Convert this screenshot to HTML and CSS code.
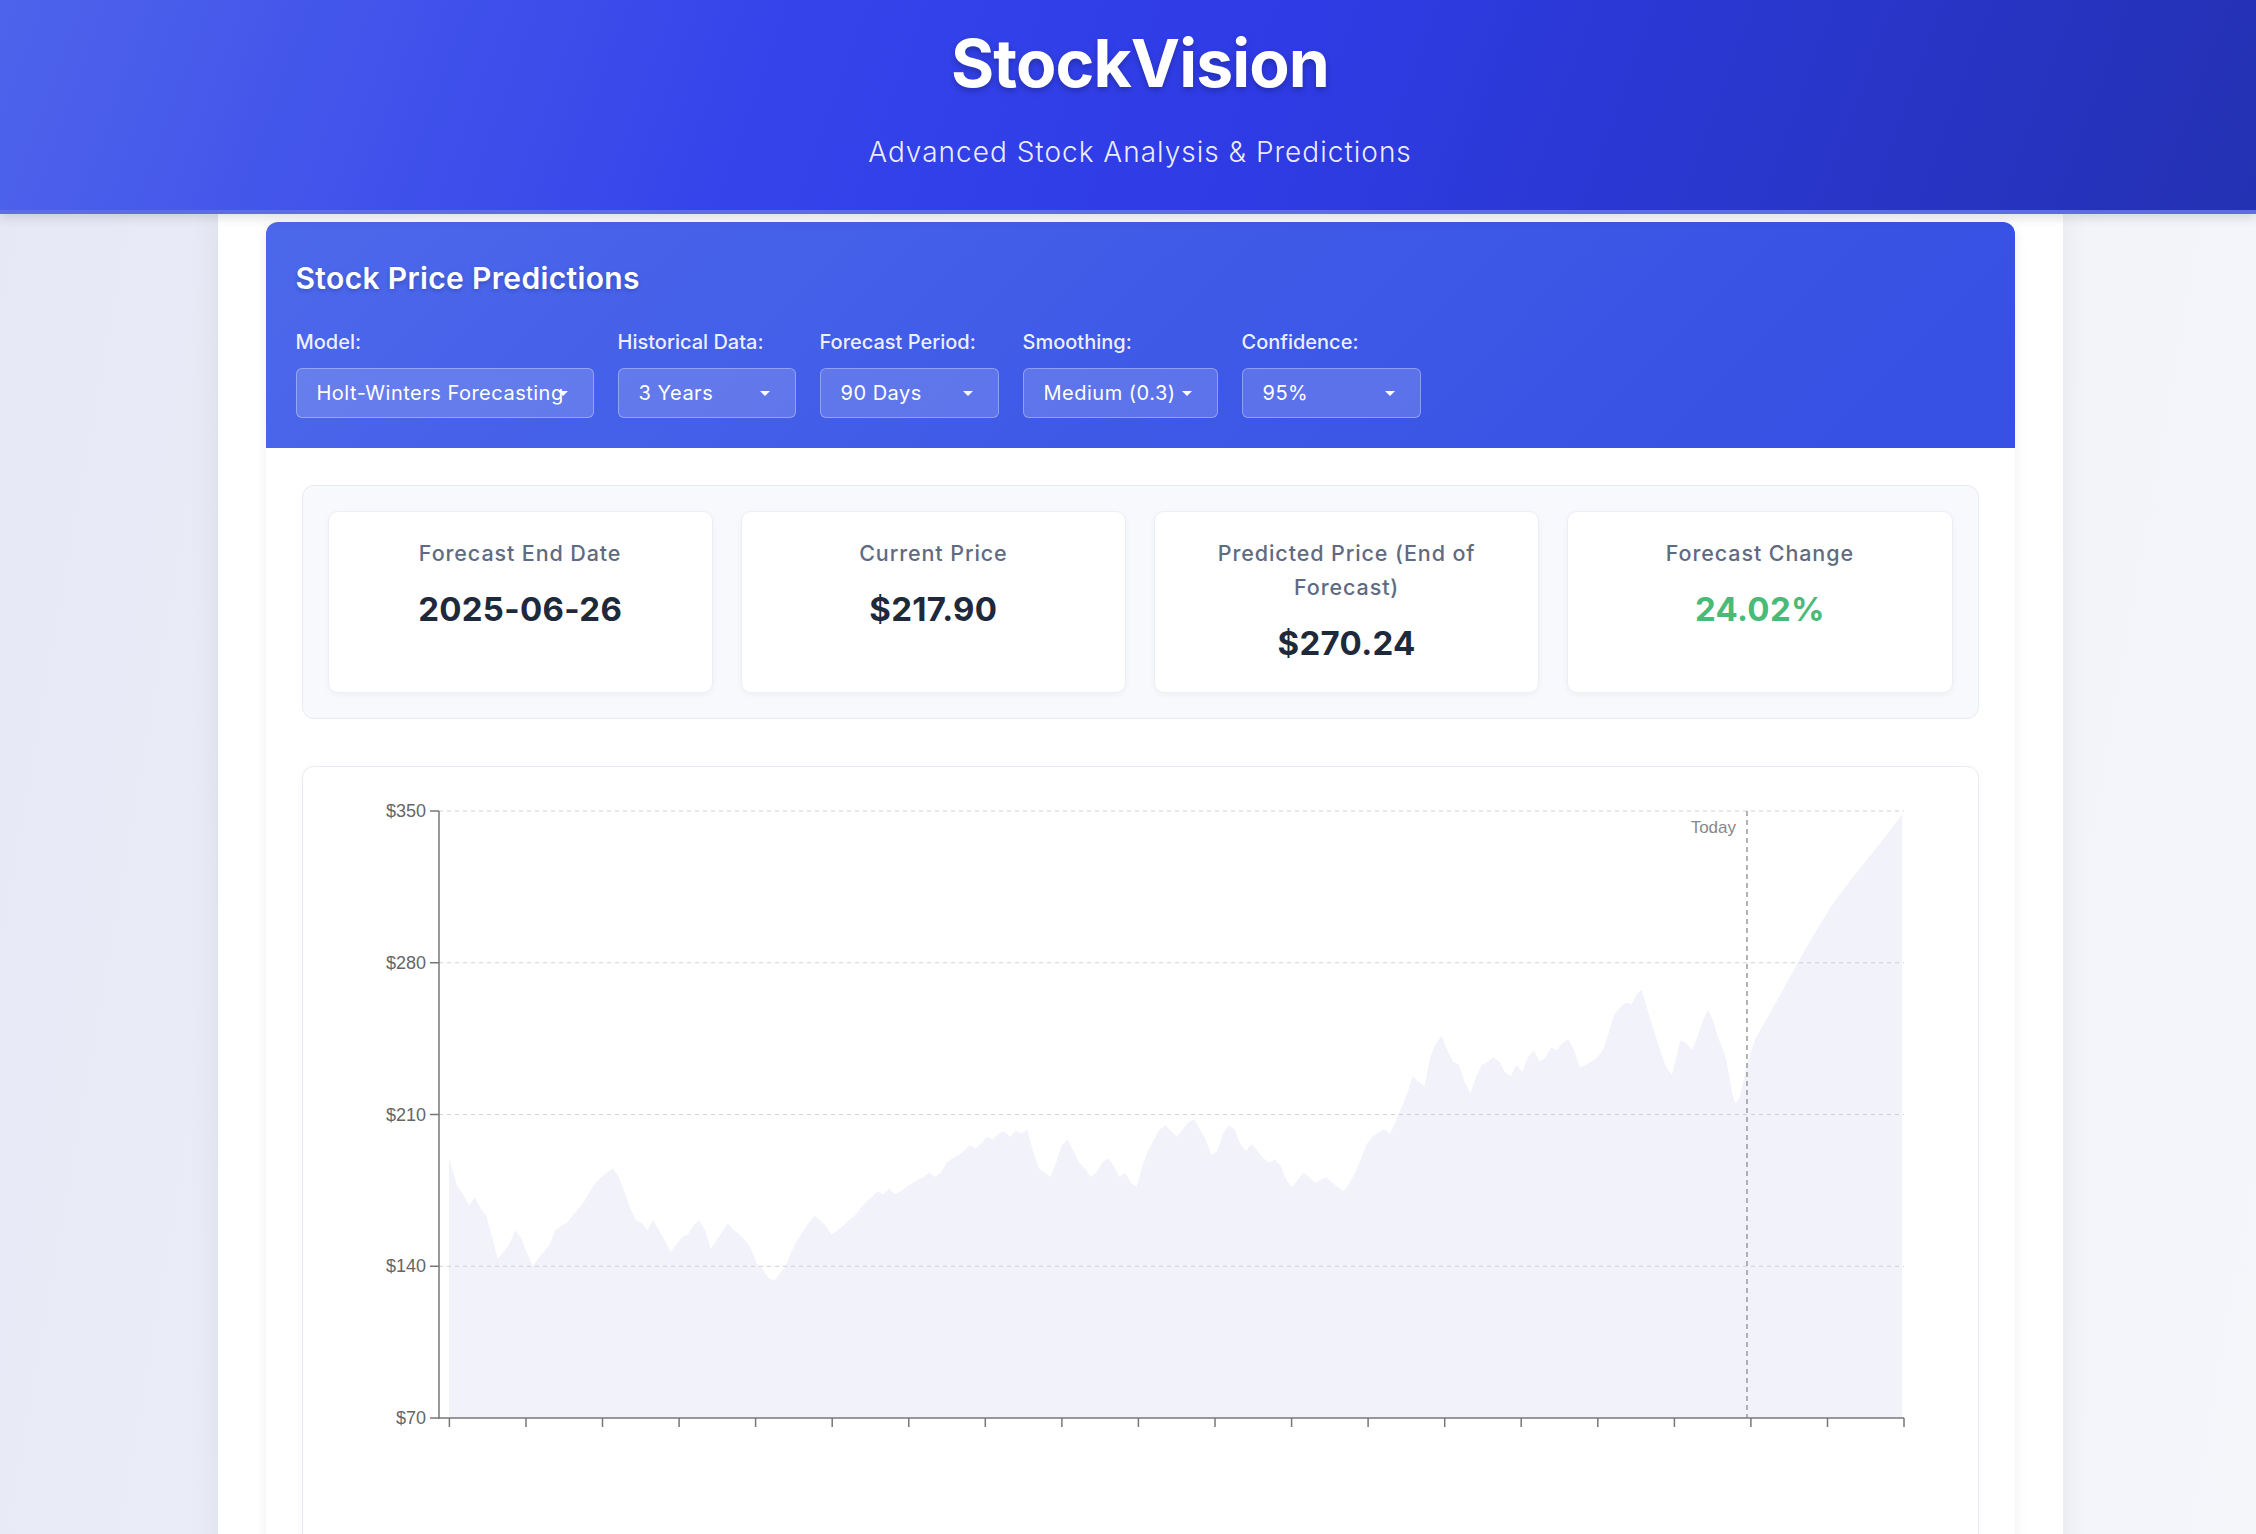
FILE: index.html
```html
<!DOCTYPE html>
<html lang="en">
<head>
<meta charset="utf-8">
<title>StockVision</title>
<link rel="stylesheet" href="styles.css">
</head>
<body>
<header class="site-header">
  <h1 class="brand">StockVision</h1>
  <p class="tagline">Advanced Stock Analysis &amp; Predictions</p>
</header>
<main class="page">
  <div class="container">
    <section class="pred-card">
      <div class="pred-head">
        <h2 class="pred-title">Stock Price Predictions</h2>
        <div class="controls">
          <div class="control">
            <div class="control-label">Model:</div>
            <div class="select w-model"><span class="select-text">Holt-Winters Forecasting</span></div>
          </div>
          <div class="control">
            <div class="control-label">Historical Data:</div>
            <div class="select w-hist"><span class="select-text">3 Years</span></div>
          </div>
          <div class="control">
            <div class="control-label">Forecast Period:</div>
            <div class="select w-period"><span class="select-text">90 Days</span></div>
          </div>
          <div class="control">
            <div class="control-label">Smoothing:</div>
            <div class="select w-smooth"><span class="select-text">Medium (0.3)</span></div>
          </div>
          <div class="control">
            <div class="control-label">Confidence:</div>
            <div class="select w-conf"><span class="select-text">95%</span></div>
          </div>
        </div>
      </div>
      <div class="pred-body">
        <div class="summary">
          <div class="stat">
            <div class="stat-label">Forecast End Date</div>
            <div class="stat-value">2025-06-26</div>
          </div>
          <div class="stat">
            <div class="stat-label">Current Price</div>
            <div class="stat-value">$217.90</div>
          </div>
          <div class="stat">
            <div class="stat-label">Predicted Price (End of Forecast)</div>
            <div class="stat-value">$270.24</div>
          </div>
          <div class="stat">
            <div class="stat-label">Forecast Change</div>
            <div class="stat-value positive">24.02%</div>
          </div>
        </div>
        <div class="chart-card">
          <svg class="chart" width="1674" height="800" viewBox="0 0 1674 800" xmlns="http://www.w3.org/2000/svg">
            <g transform="translate(-303 -767)">
              <g transform="scale(1.43878)">
                <path class="area" d="M312,985.5 L312,805 318,825 322,830 326,838 330,832 334,840 338,845 342,860 346,875 350,870 354,865 358,855 362,860 366,870 370,880 374,875 378,870 382,865 386,855 390,852 394,850 398,845 402,840 406,835 410,828 414,822 418,818 422,815 426,812 430,818 434,828 438,840 442,848 446,850 450,855 454,848 458,855 462,862 466,870 470,865 474,860 478,858 482,852 486,848 490,855 494,868 498,862 502,856 506,850 510,855 514,858 518,862 522,868 526,878 530,882 534,888 538,890 542,885 546,880 550,870 554,862 558,856 562,850 566,845 570,848 574,852 578,858 582,855 586,852 590,848 594,845 598,840 602,835 606,832 610,828 614,830 618,826 622,830 626,828 630,825 634,822 638,820 642,818 646,815 650,818 654,815 658,808 662,805 666,803 670,800 674,796 678,798 682,795 686,790 690,792 694,788 698,786 702,790 706,786 710,788 714,785 718,800 722,812 726,815 730,818 734,808 738,796 742,792 746,800 750,808 754,812 758,818 762,815 766,808 770,805 774,810 778,818 782,815 786,822 790,825 794,810 798,800 802,792 806,785 810,782 814,786 818,790 822,785 826,780 830,778 834,785 838,792 842,803 846,800 850,788 854,782 858,785 862,795 866,800 870,795 874,800 878,805 882,808 886,806 890,810 894,820 898,825 902,820 906,815 910,818 914,822 918,820 922,818 926,822 930,825 934,828 938,822 942,815 946,805 950,795 954,790 958,787 962,785 966,788 970,780 974,770 978,760 982,748 986,752 990,755 994,735 998,725 1002,720 1006,730 1010,738 1014,740 1018,752 1022,760 1026,748 1030,740 1034,738 1038,735 1042,738 1046,745 1050,748 1054,740 1058,745 1062,735 1066,730 1070,738 1074,735 1078,728 1082,730 1086,725 1090,722 1094,730 1098,742 1102,740 1106,738 1110,735 1114,730 1118,718 1122,705 1126,700 1130,697 1134,698 1138,690 1141,688 1146,705 1150,718 1154,730 1158,742 1162,747 1165,735 1168,723 1172,725 1176,730 1180,720 1184,708 1187,702 1191,710 1194,721 1197,728 1200,737 1204,760 1206,767 1209,763 1212,750 1214,740 1220,722 1228,708 1238,690 1249,670 1261,649 1274,628 1286,612 1298,597 1310,582 1322,566 L1322,985.5 Z"/>
              </g>
              <g class="grid">
                <line x1="439" y1="811" x2="1904" y2="811"/>
                <line x1="439" y1="962.75" x2="1904" y2="962.75"/>
                <line x1="439" y1="1114.5" x2="1904" y2="1114.5"/>
                <line x1="439" y1="1266.25" x2="1904" y2="1266.25"/>
              </g>
              <line class="today" x1="1747" y1="811" x2="1747" y2="1418"/>
              <text class="today-label" x="1736" y="833">Today</text>
              <g class="axis">
                <line x1="439" y1="811" x2="439" y2="1419"/>
                <line x1="430" y1="811" x2="439" y2="811"/>
                <line x1="430" y1="962.75" x2="439" y2="962.75"/>
                <line x1="430" y1="1114.5" x2="439" y2="1114.5"/>
                <line x1="430" y1="1266.25" x2="439" y2="1266.25"/>
                <line x1="430" y1="1418" x2="439" y2="1418"/>
              </g>
              <g class="axis-x">
                <line x1="439" y1="1418" x2="1904" y2="1418"/>
                <line x1="449.4" y1="1418" x2="449.4" y2="1427"/>
                <line x1="526" y1="1418" x2="526" y2="1427"/>
                <line x1="602.5" y1="1418" x2="602.5" y2="1427"/>
                <line x1="679.1" y1="1418" x2="679.1" y2="1427"/>
                <line x1="755.6" y1="1418" x2="755.6" y2="1427"/>
                <line x1="832.2" y1="1418" x2="832.2" y2="1427"/>
                <line x1="908.8" y1="1418" x2="908.8" y2="1427"/>
                <line x1="985.3" y1="1418" x2="985.3" y2="1427"/>
                <line x1="1061.9" y1="1418" x2="1061.9" y2="1427"/>
                <line x1="1138.4" y1="1418" x2="1138.4" y2="1427"/>
                <line x1="1215" y1="1418" x2="1215" y2="1427"/>
                <line x1="1291.6" y1="1418" x2="1291.6" y2="1427"/>
                <line x1="1368.1" y1="1418" x2="1368.1" y2="1427"/>
                <line x1="1444.7" y1="1418" x2="1444.7" y2="1427"/>
                <line x1="1521.2" y1="1418" x2="1521.2" y2="1427"/>
                <line x1="1597.8" y1="1418" x2="1597.8" y2="1427"/>
                <line x1="1674.4" y1="1418" x2="1674.4" y2="1427"/>
                <line x1="1750.9" y1="1418" x2="1750.9" y2="1427"/>
                <line x1="1827.5" y1="1418" x2="1827.5" y2="1427"/>
                <line x1="1904" y1="1418" x2="1904" y2="1427"/>
              </g>
              <g class="ylabels">
                <text x="426" y="817">$350</text>
                <text x="426" y="968.75">$280</text>
                <text x="426" y="1120.5">$210</text>
                <text x="426" y="1272.25">$140</text>
                <text x="426" y="1424">$70</text>
              </g>
            </g>
          </svg>
        </div>
      </div>
    </section>
  </div>
</main>
</body>
</html>
```

FILE: styles.css
```css
* { box-sizing: border-box; }

html, body { margin: 0; padding: 0; }

body {
  font-family: Inter, "Noto Sans", "Liberation Sans", sans-serif;
  background: linear-gradient(100deg, #e6e8f6 0%, #eef0f8 40%, #f4f6fa 100%);
  color: #1e293b;
  min-height: 100vh;
}

.site-header {
  position: relative;
  z-index: 2;
  background: linear-gradient(110deg, #4e63eb 0%, #3443ea 35%, #2f3ce6 55%, #2331b3 100%);
  border-bottom: 4px solid #5e6de6;
  box-shadow: 0 4px 10px rgba(0, 0, 0, 0.12);
  padding: 24px 0 37px 24px;
  text-align: center;
  color: #fff;
}

.brand {
  margin: 0 0 28px;
  font-size: 66px;
  line-height: 79px;
  font-weight: 700;
  letter-spacing: -0.9px;
  text-shadow: 0 3px 6px rgba(0, 0, 0, 0.25);
}

.tagline {
  margin: 0;
  font-size: 28px;
  line-height: 42px;
  font-weight: 300;
  letter-spacing: 1px;
  color: rgba(255, 255, 255, 0.92);
}

.page {
  padding-left: 24px;
}

.container {
  width: 1845px;
  margin: 0 auto;
  background: #fff;
  padding: 8px 48px 40px;
  box-shadow: 0 0 30px rgba(0, 0, 0, 0.07);
}

.pred-card {
  background: #fff;
  border-radius: 12px;
  overflow: hidden;
  box-shadow: 0 2px 14px rgba(0, 0, 0, 0.07);
}

.pred-head {
  background: linear-gradient(135deg, #4c68ea 0%, #3f5ae7 50%, #3550e3 100%);
  padding: 38px 30px 30px;
  color: #fff;
}

.pred-title {
  margin: 0 0 31px;
  font-size: 30px;
  line-height: 36px;
  font-weight: 600;
  letter-spacing: 0.35px;
  text-shadow: 0 2px 4px rgba(0, 0, 0, 0.2);
}

.controls {
  display: flex;
  gap: 24px;
  align-items: flex-start;
}

.control {
  display: flex;
  flex-direction: column;
}

.control-label {
  font-size: 20px;
  line-height: 30px;
  font-weight: 500;
  margin-bottom: 11px;
  color: rgba(255, 255, 255, 0.92);
}

.select {
  position: relative;
  height: 50px;
  display: flex;
  align-items: center;
  padding: 0 20px;
  border: 1.5px solid rgba(255, 255, 255, 0.32);
  border-radius: 6px;
  background: rgba(255, 255, 255, 0.16);
  font-size: 20px;
  letter-spacing: 0.5px;
  color: #fff;
  white-space: nowrap;
  overflow: hidden;
}

.select::after {
  content: "";
  position: absolute;
  right: 25px;
  top: 50%;
  margin-top: -2px;
  border-left: 5px solid transparent;
  border-right: 5px solid transparent;
  border-top: 5px solid #fff;
}

.w-model { width: 298px; }
.w-hist { width: 178px; }
.w-period { width: 179px; }
.w-smooth { width: 195px; }
.w-conf { width: 179px; }

.pred-body {
  padding: 37px 36px 0;
}

.summary {
  display: grid;
  grid-template-columns: repeat(4, 1fr);
  gap: 28px;
  padding: 25px;
  background: #f8f9fc;
  border: 1px solid #e8ebf2;
  border-radius: 12px;
}

.stat {
  background: #fff;
  border: 1px solid #eceff5;
  border-radius: 10px;
  padding: 24px 16px 26px;
  text-align: center;
  box-shadow: 0 2px 6px rgba(0, 0, 0, 0.04);
}

.stat-label {
  font-size: 21.5px;
  line-height: 34px;
  font-weight: 500;
  letter-spacing: 0.9px;
  color: #5f6b82;
}

.stat-value {
  margin-top: 17px;
  font-size: 33px;
  line-height: 45px;
  font-weight: 700;
  letter-spacing: 0.3px;
  color: #1e293b;
}

.stat-value.positive {
  color: #48bb78;
}

.chart-card {
  margin-top: 47px;
  background: #fff;
  border: 1px solid #e8ecf2;
  border-radius: 12px;
  box-shadow: 0 2px 8px rgba(0, 0, 0, 0.04);
  overflow: hidden;
}

.chart {
  display: block;
}

.area {
  fill: #f2f3fa;
}

.grid line {
  stroke: #cfcfd4;
  stroke-width: 1.2;
  stroke-dasharray: 4 4;
}

.today {
  stroke: #9a9a9a;
  stroke-width: 1.5;
  stroke-dasharray: 5 4;
}

.today-label {
  font-family: "Liberation Sans", Arial, sans-serif;
  font-size: 17px;
  fill: #888;
  text-anchor: end;
}

.axis line {
  stroke: #777;
  stroke-width: 1.5;
}

.axis-x line {
  stroke: #777;
  stroke-width: 1.5;
}

.ylabels text {
  font-family: "Liberation Sans", Arial, sans-serif;
  font-size: 18px;
  fill: #666;
  text-anchor: end;
}
```
